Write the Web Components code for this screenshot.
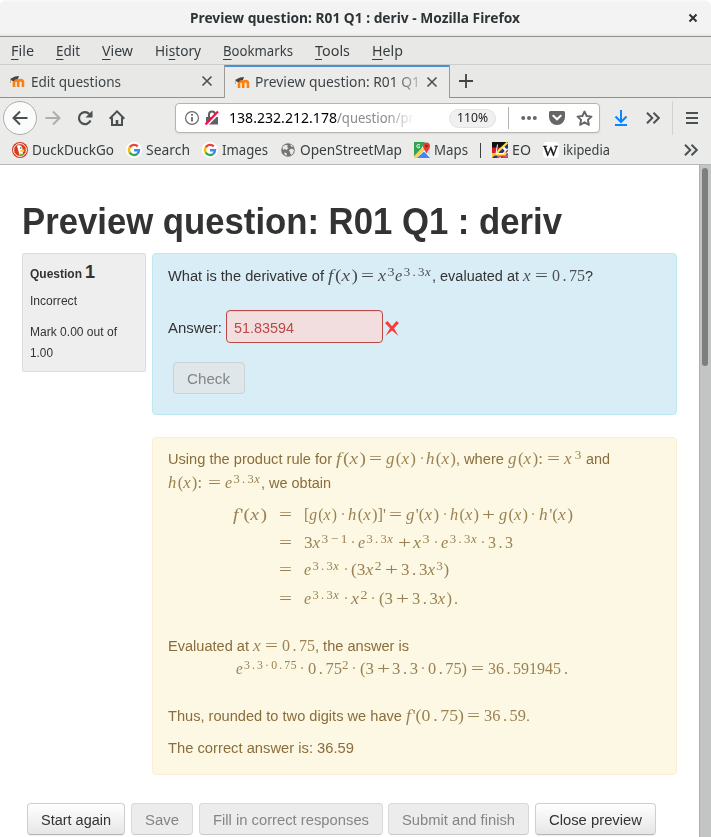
<!DOCTYPE html>
<html lang="en">
<head>
<meta charset="utf-8">
<title>Preview question: R01 Q1 : deriv</title>
<style>
html, body { margin: 0; height: 837px; overflow: hidden; background: #fff; }
</style>
</head>
<body>
<browser-window></browser-window>
<script>
/* Text squeezed or stretched horizontally to the width given in "w". */
class FitText extends HTMLElement {
  connectedCallback() {
    const root = this.attachShadow({ mode: 'open' });
    root.innerHTML = `<style>
      :host { display: inline-block; flex: none; white-space: pre; }
      span { display: inline-block; transform-origin: 0 50%; }
    </style><span><slot></slot></span>`;
    const w = +this.getAttribute('w');
    this.style.width = w + 'px';
    const span = root.querySelector('span');
    const natural = span.getBoundingClientRect().width;
    if (natural) span.style.transform = `scaleX(${w / natural})`;
  }
}
customElements.define('fit-text', FitText);

const define = (name, html) => customElements.define(name, class extends HTMLElement {
  connectedCallback() {
    if (this.shadowRoot) return;
    this.attachShadow({ mode: 'open' }).innerHTML = typeof html === 'function' ? html(this) : html;
  }
});
const UI = `"Noto Sans", sans-serif`;
const fit = (w, t, extra = '') => `<fit-text w="${w}" ${extra}>${t}</fit-text>`;
const svg = (w, h, body, extra = '') => `<svg width="${w}" height="${h}" viewBox="0 0 ${w} ${h}" fill="none" ${extra}>${body}</svg>`;

const ICONS = {
  moodle: svg(16, 14, `<path d="M5 13V8.500a1.900 1.900 0 0 1 4.200 0V13m0-4.500a2.200 2.200 0 0 1 4.800 0V13" stroke="#f98012" stroke-width="2.600"/><path d="M1 5L6 2.500l4-.5-1 3-3 .500-1.200 1.700-1.800-.500z" fill="#444"/><path d="M1.500 5v4" stroke="#caa68c" stroke-width="1"/>`),
  close: svg(12, 12, `<path d="M1.500 1.500l9 9m0-9l-9 9" stroke="#4b5052" stroke-width="1.600"/>`),
  wmclose: svg(10, 10, `<path d="M1.500 1.500l7 7m0-7l-7 7" stroke="#2e3436" stroke-width="2"/>`),
  plus: svg(14, 14, `<path d="M7 0v14M0 7h14" stroke="#3f4547" stroke-width="1.800"/>`),
  back: svg(16, 16, `<path d="M15.500 8H1.500M8 1.500L1.500 8 8 14.500" stroke="#4a4f52" stroke-width="2"/>`),
  forward: svg(16, 16, `<path d="M.5 8h14M8 1.500L14.500 8 8 14.500" stroke="#adadab" stroke-width="2"/>`),
  reload: svg(16, 16, `<path d="M13.500 10.500A6 6 0 1 1 12.300 4" stroke="#4a4f52" stroke-width="2.200"/><path d="M15.500.5v7H8.500z" fill="#4a4f52"/>`),
  home: svg(16, 16, `<path d="M.7 8.700L8 1.400l7.300 7.300M3 7.500V15h10V7.500" stroke="#4a4f52" stroke-width="2"/><path d="M6.700 15v-5h2.600v5z" fill="#4a4f52"/>`),
  info: svg(14, 14, `<circle cx="7" cy="7" r="6.400" stroke="#6a6a6a" stroke-width="1.200"/><path d="M7 6v4.600M7 3v1.700" stroke="#6a6a6a" stroke-width="1.800"/>`),
  lock: svg(16, 16, `<path d="M2 7h12v7.500H2z" fill="#606060"/><path d="M5 7V4.500a3 3 0 0 1 6 0V7" stroke="#606060" stroke-width="2"/><path d="M2 15.500L15.500 2" stroke="#fff" stroke-width="3"/><path d="M1.500 14.500L14 1.500" stroke="#f0144e" stroke-width="2.300"/>`),
  dots: svg(16, 6, `<g fill="#666"><circle cx="2.200" cy="3" r="2"/><circle cx="8" cy="3" r="2"/><circle cx="13.800" cy="3" r="2"/></g>`),
  pocket: svg(16, 14, `<path d="M1.500 0h13A1.500 1.500 0 0 1 16 1.500V6A8 8 0 0 1 0 6V1.500A1.500 1.500 0 0 1 1.500 0z" fill="#666"/><path d="M4.300 4.800L8 8.300l3.700-3.500" stroke="#fff" stroke-width="2" stroke-linecap="round"/>`),
  star: svg(17, 16, `<path d="M8.500 1.500l2.100 4.500 4.900.600-3.600 3.300 1 4.900-4.400-2.500-4.400 2.500 1-4.900-3.600-3.300 4.900-.600z" stroke="#666" stroke-width="1.900" stroke-linejoin="round"/>`),
  download: svg(14, 16, `<path d="M7 0v11.500M1.500 6.500L7 12l5.500-5.500M1 15h12" stroke="#0a84ff" stroke-width="2"/>`),
  more: svg(14, 12, `<path d="M1 .7L6.300 6 1 11.300M7.500.7L12.800 6l-5.300 5.300" stroke="#4c5153" stroke-width="2"/>`),
  menu: svg(12, 12, `<path d="M0 1h12M0 6h12M0 11h12" stroke="#4a4f52" stroke-width="2"/>`),
  ddg: svg(16, 16, `<circle cx="8" cy="8" r="8" fill="#d63a1b"/><circle cx="8" cy="8" r="6.400" stroke="#fff" stroke-width="1"/><path d="M5 3.800C8 2.500 10.500 4 10.500 7l.5 6H7.500z" fill="#fff"/><path d="M8 8l4.500-.5-.5 2.200H8.500z" fill="#fc3"/><path d="M7.500 11.500l4 .5-1 2H8z" fill="#65bc46"/><circle cx="8.700" cy="6" r=".8" fill="#2d4f8e"/>`),
  google: svg(16, 16, `<circle cx="8" cy="8" r="8" fill="#fff"/><g stroke-width="2.400"><path d="M11.700 4.300A5 5 0 0 0 3.800 5.400" stroke="#ea4335"/><path d="M3.800 5.300a5 5 0 0 0 0 5.400" stroke="#fbbc05"/><path d="M3.700 10.500a5 5 0 0 0 7.600 1.300" stroke="#34a853"/><path d="M8 8.200h5a5 5 0 0 1-1.700 3.600" stroke="#4285f4"/></g>`),
  globe: svg(14, 14, `<circle cx="7" cy="7" r="6.800" fill="#747474"/><path d="M1.500 3.800l3-2 2.500.700-1 1.500 1.500 1-2 2L3.500 6 2 7zM8 7l3-1.500 2 1.500-1 3.500-2 1.500-1-2.500zM9 1.500l2 .500 1.200 2-2-.500zM3 9.500l2.500.500.500 2.500-2-.500z" fill="#e9e9e8"/>`),
  maps: svg(16, 16, `<path d="M1 1h14v14H1z" fill="#fff"/><path d="M0 0h11L7 7l-7 7.500z" fill="#32a350"/><path d="M0 14.500L8.500 6l2 2L3 16H0z" fill="#fbd04b"/><path d="M3 16l7-6.500 6 6.500z" fill="#4285f4"/><path d="M10.500 9L16 14V6z" fill="#d5dbe5"/><path d="M12.500 12c-.3-3-3.500-4.500-3.500-8a3.500 3.500 0 0 1 7 0c0 3.500-3.200 5-3.500 8z" fill="#e53b30"/><circle cx="12.500" cy="4" r="1.200" fill="#7b241e"/><path d="M6 3.300A1.700 1.700 0 1 0 6 5H4.500" stroke="#fff" stroke-width="1"/>`),
  eo: svg(16, 16, `<path d="M0 0h16v16H0z" fill="#24358b"/><path d="M0 0h16L0 16z" fill="#111"/><path d="M0 5.500h10.500L0 16z" fill="#d51c27"/><path d="M0 11h5l-5 5z" fill="#f7c924"/><path d="M8 16l8-9M11 5l5 6M5 14h11" stroke="#fff" stroke-width="2.500"/><path d="M9 16l7-8M5 14h11" stroke="#d51c27" stroke-width="1.400"/><path d="M15.500.5L7 8.500 4.500 12.500h8l1.500-2" stroke="#ffe34d" stroke-width="2.200"/><path d="M5.500 2.500L4 11.500h8" stroke="#fff" stroke-width="1"/>`),
  wrong: svg(14, 15, `<path d="M2.500 0L7 5.200 11.500 0 14 2 9 7.300 13.500 15 7 9.500.5 15 5 7.300 0 2z" fill="#fb3d3a"/>`)
};
define('ui-icon', el => `<style>:host{display:block;flex:none;line-height:0}svg{display:block}</style>${ICONS[el.getAttribute('name')]}`);
const icon = (name, style = '') => `<ui-icon name="${name}" style="${style}"></ui-icon>`;

define('title-bar', `<style>
 :host{display:flex;align-items:center;height:36px;box-sizing:border-box;background:linear-gradient(#fafafa 0,#f3f3f3 2px,#f3f3f3 33px,#e5e5e3 36px);font:bold 14.500px/34px ${UI};color:#2e3436;padding:0 13px 1px 190px;justify-content:space-between;border-radius:6px 6px 0 0}
 fit-text{margin-top:-2px}
 </style>${fit(330, 'Preview question: R01 Q1 : deriv - Mozilla Firefox')}${icon('wmclose')}`);

define('menu-bar', `<style>
 :host{display:flex;height:29px;box-sizing:border-box;padding-left:11px;gap:22px;border-top:1px solid #8f908c;background:#e8e8e7;border-bottom:1px solid #ccccca;font:14.900px/27px ${UI};color:#373d3f}
 u{text-underline-offset:3px;text-decoration-thickness:1px}
 </style>${[[23, '<u>F</u>ile'], [24, '<u>E</u>dit'], [31, '<u>V</u>iew'], [46, 'Hi<u>s</u>tory'], [70, '<u>B</u>ookmarks'], [35, '<u>T</u>ools'], [31, '<u>H</u>elp']].map(m => fit(...m)).join('')}`);

define('tab-strip', `<style>
 :host{display:flex;height:33px;background:#e8e8e7;font:14.900px/33px ${UI};color:#3f4547}
 .tab,.rest{box-sizing:border-box;display:flex;align-items:center;border-bottom:1px solid #8f908c}
 .tab{width:224px;padding:0 11px 0 9px}
 .active{width:226px;border:solid #9a9b98;border-width:0 1px;background:#ebebea;box-shadow:inset 0 2px #4a90d9;padding:0 11px 0 9px}
 .label{margin-left:6px;flex:1;height:33px}
 .active .label{margin-left:5px;-webkit-mask:linear-gradient(90deg,#000 138px,transparent 174px);mask:linear-gradient(90deg,#000 138px,transparent 174px)}
 .rest{flex:1;padding-left:9px}
 </style><div class="tab">${icon('moodle')}<div class="label">${fit(90, 'Edit questions')}</div>${icon('close')}</div>
 <div class="tab active">${icon('moodle')}<div class="label">${fit(165, 'Preview question: R01 Q1')}</div>${icon('close')}</div>
 <div class="rest">${icon('plus')}</div>`);

define('nav-bar', `<style>
 :host{display:flex;align-items:center;height:40px;background:#ebebea;font:14.900px/28px ${UI};color:#000}
 .back{width:32px;height:32px;border:1px solid #aeaeac;border-radius:50%;background:#fbfbfb;display:grid;place-items:center;margin-left:3px}
 .url{box-sizing:border-box;width:425px;height:30px;margin-left:50px;border:1px solid #b4b4b2;border-radius:4px;background:#fff;display:flex;align-items:center;padding-left:9px;box-shadow:0 1px 2px #0001}
 .path{display:flex;height:30px;margin-left:9px;width:220px}
 .path .p{color:#8b8b8b;-webkit-mask:linear-gradient(90deg,#000 50px,transparent 78px);mask:linear-gradient(90deg,#000 50px,transparent 78px)}
 .zoom{box-sizing:border-box;width:47px;height:19px;border-radius:10px;background:#f0f0f0;border:1px solid #e2e2e2;font-size:12px;line-height:16px;padding-left:7px;color:#222}
 .sep{width:1px;height:22px;background:#b5b5b5;margin:0 12px 0 12px}
 .vsep{width:1px;height:34px;background:#d2d2d0;margin:0 13px 0 12px}
 </style>
 <div class="back">${icon('back')}</div>${icon('forward', 'margin-left:8px')}${icon('reload', 'margin-left:16px')}${icon('home', 'margin-left:16px')}
 <div class="url">${icon('info')}${icon('lock', 'margin-left:5px')}<div class="path">${fit(108, '138.232.212.178')}${fit(77, '/question/pr', 'class="p"')}</div>
 <div class="zoom">${fit(31, '110%')}</div><div class="sep"></div>${icon('dots')}${icon('pocket', 'margin-left:12px')}${icon('star', 'margin-left:11px')}</div>
 ${icon('download', 'margin-left:14px')}${icon('more', 'margin-left:18px')}<div class="vsep"></div>${icon('menu')}`);

const bm = (gap, name, tgap, w, t) => `${icon(name, `margin-left:${gap}px`)}${fit(w, t, `style="margin-left:${tgap}px"`)}`;
define('bookmark-bar', `<style>
 :host{display:flex;align-items:center;box-sizing:border-box;height:27px;background:#ebebea;border-bottom:1px solid #b7b7b5;font:14.900px/24px ${UI};color:#393f41;padding:0 13px 2px 0}
 fit-text{margin-top:-2px}
 .bar{width:1px;height:15px;background:#3a4042;margin-left:12px;margin-right:1px}
 .w{width:16px;height:16px;border-radius:4px;background:#fff;margin-left:12px;font:15px/18px "Liberation Serif",serif;color:#111;-webkit-text-stroke:.3px #111}
 .w fit-text{margin:0}
 .fill{flex:1}
 </style>${bm(12, 'ddg', 4, 82, 'DuckDuckGo')}${bm(12, 'google', 4, 44, 'Search')}${bm(12, 'google', 4, 46, 'Images')}${bm(13, 'globe', 5, 102, 'OpenStreetMap')}${bm(12, 'maps', 4, 34, 'Maps')}<div class="bar"></div>${bm(10, 'eo', 4, 19, 'EO')}<div class="w">${fit(15, 'W')}</div>${fit(47, 'ikipedia', 'style="margin-left:4px"')}<div class="fill"></div>${icon('more')}`);

/* A line of runs: each run is [left, right, html, kind]; kind "m" is mathematics. */
const line = (start, top, runs) => {
  let x = start;
  return `<div class="line" style="margin-top:${top}px">` + runs.map(([a, b, t, k = '']) => {
    const s = `<fit-text class="${k}" w="${b - a}" style="margin-left:${a - x}px">${t}</fit-text>`;
    x = b;
    return s;
  }).join('') + '</div>';
};
const LINE = `.line{display:flex;align-items:baseline;height:24px;line-height:24px}
 .m{font-family:"Liberation Serif",serif;font-size:16px;opacity:.85;word-spacing:-1.500px}
 .m i{letter-spacing:1.300px}
 sup{font-size:12.500px;line-height:0;vertical-align:5px;letter-spacing:.5px;word-spacing:-1.800px}
 sup i{letter-spacing:.5px}`;
const X = '<i>x</i>', E = '<i>e</i><sup>3 . 3<i>x</i></sup>', P = c => `<i>${c}</i>(<i>x</i>)`;
const eq = a => [a - 1, a + 12, '=', 'm'], plus = a => [a - 1, a + 12, '+', 'm'], dot = a => [a - 1, a + 3, '·', 'm'];
const m = (a, b, t) => [a, b, t, 'm'];

define('push-button', el => `<style>
 :host{display:block;box-sizing:border-box;height:32px;border:1px solid #cfcfcf;border-bottom-color:#b5b5b5;border-radius:4px;background:linear-gradient(#fff,#e6e6e6);padding-left:13px;line-height:31px;color:#333;box-shadow:0 1px 1px #0001}
 :host([off]){background:#ececec;color:#858585;border-color:#d9d9d9;border-bottom-color:#c8c8c8;box-shadow:none}
 </style><slot></slot>`);
const button = (w, tw, t, off, style = '') => `<push-button ${off ? 'off' : ''} style="width:${w}px;${style}">${fit(tw, t)}</push-button>`;

define('question-info', `<style>
 :host{display:block;box-sizing:border-box;width:124px;height:119px;background:#eee;border:1px solid #dcdcdc;border-radius:2px;padding:7px 7px;font-size:12px;line-height:21px;color:#333}
 .no{font-weight:bold;display:flex;align-items:baseline;gap:3px;height:24px;line-height:22px}
 .no .n{font-size:18px}
 .state{margin:6px 0 10px}
 </style><div class="no">${fit(52, 'Question')}<span class="n">1</span></div><div class="state">${fit(47, 'Incorrect')}</div><div>${fit(87, 'Mark 0.00 out of')}</div><div>${fit(23, '1.00')}</div>`);

define('question-form', `<style>${LINE}
 :host{display:block;box-sizing:border-box;height:162px;background:#d9edf7;border:1px solid #bce8f1;border-radius:4px;padding:10px 15px;color:#333}
 .answer{display:flex;align-items:center;margin-top:22px}
 .answer>fit-text{margin-top:2px}
 .input{box-sizing:border-box;width:157px;height:33px;border:1px solid #b94a48;border-radius:4px;background:#f2dede;color:#b94a48;box-shadow:inset 0 1px 1px #0001;line-height:33px;padding-left:7px;margin:0 2px 0 4px}
 .answer ui-icon{margin-top:3px}
 </style>${line(168, 0, [[168, 324, 'What is the derivative of'], m(328, 358, P('f')), eq(362), m(378, 395, X + '<sup>3</sup>'), m(395, 432, E), [432, 519, ', evaluated at'], m(523, 532, X), eq(536), m(552, 585, '0 . 75'), [585, 593, '?']])}
 <div class="answer">${fit(54, 'Answer:')}<div class="input">${fit(60, '51.83594')}</div>${icon('wrong')}</div>
 ${button(72, 43, 'Check', true, 'margin:19px 0 0 5px;background:#dfe7ea;border-color:#c9d2d6')}`);

define('question-feedback', `<style>${LINE}
 :host{display:block;box-sizing:border-box;height:338px;background:#fcf8e3;border:1px solid #fbeed5;border-radius:4px;padding:9px 15px;color:#8a6d3b}
 </style>
 ${line(168, 0, [[168, 332, 'Using the product rule for'], m(336, 366, P('f')), eq(370), m(386, 416, P('g')), dot(421), m(426, 456, P('h')), [456, 460, ','], [464, 504, 'where'], m(508, 543, P('g') + ':'), eq(548), m(564, 582, X + '<sup> 3</sup>'), [586, 610, 'and']])}
 ${line(168, 0, [m(168, 202, P('h') + ':'), eq(209), m(225, 261, E), [261, 265, ','], [269, 331, 'we obtain']])}
 ${line(168, 8, [m(233, 267, "<i>f</i>'(<i>x</i>)"), eq(280), m(304, 337, '[' + P('g')), dot(342), m(348, 386, P('h') + "]'"), eq(390), m(406, 439, "<i>g</i>'(<i>x</i>)"), dot(444), m(450, 479, P('h')), plus(483), m(499, 528, P('g')), dot(532), m(539, 573, "<i>h</i>'(<i>x</i>)")])}
 ${line(168, 4, [eq(280), m(304, 348, '3<i>x</i><sup>3 − 1</sup>'), dot(352), m(358, 394, E), plus(399), m(413, 430, X + '<sup>3</sup>'), dot(435), m(441, 478, E), dot(482), m(488, 513, '3 . 3')])}
 ${line(168, 3, [eq(280), m(304, 340, E), dot(345), m(351, 382, '(3<i>x</i><sup>2</sup>'), plus(386), m(401, 449, '3 . 3<i>x</i><sup>3</sup>)')])}
 ${line(168, 5, [eq(280), m(304, 340, E), dot(345), m(351, 368, X + '<sup>2</sup>'), dot(372), m(379, 393, '(3'), plus(397), m(412, 452, '3 . 3<i>x</i>)'), m(454, 458, '.')])}
 ${line(168, 23, [[168, 249, 'Evaluated at'], m(253, 262, X), eq(266), m(282, 315, '0 . 75'), [315, 409, ', the answer is']])}
 ${line(168, -1, [m(236, 297, '<i>e</i><sup>3 . 3 · 0 . 75</sup>'), dot(301), m(308, 349, '0 . 75<sup>2</sup>'), dot(353), m(360, 374, '(3'), plus(378), m(392, 418, '3 . 3'), dot(422), m(428, 467, '0 . 75)'), eq(472), m(488, 561, '36 . 591945'), m(564, 568, '.')])}
 ${line(168, 23, [[168, 402, 'Thus, rounded to two digits we have'], m(406, 464, "<i>f</i>'(0 . 75)"), eq(468), m(484, 526, '36 . 59'), [526, 530, '.']])}
 ${line(168, 8, [[168, 354, 'The correct answer is: 36.59']])}`);

define('preview-page', `<style>
 :host{display:block;flex:1;height:672px;overflow:hidden;background:#fff;font:15.400px/24px "Liberation Sans",sans-serif;color:#333}
 h1{margin:0;padding:35px 0 0 22px;height:53px;font-size:36.500px;line-height:44px}
 .question{display:flex;align-items:flex-start;gap:6px;padding-left:22px}
 .col{width:525px;display:grid;gap:22px}
 .actions{display:flex;padding:28px 0 0 27px;gap:6px}
 </style><h1>${fit(540, 'Preview question: R01 Q1 : deriv')}</h1>
 <div class="question"><question-info></question-info><div class="col"><question-form></question-form><question-feedback></question-feedback></div></div>
 <div class="actions">${button(98, 70, 'Start again')}${button(62, 34, 'Save', 1)}${button(184, 156, 'Fill in correct responses', 1)}${button(141, 113, 'Submit and finish', 1, 'margin-left:-1px')}${button(121, 93, 'Close preview')}</div>`);

define('scroll-bar', `<style>
 :host{display:block;box-sizing:border-box;width:12px;height:672px;background:#c3c5c4;border-left:1px solid #adafae;padding:3px 0 0 2px}
 div{width:6px;height:198px;border-radius:3px;background:#7b7f80}
 </style><div></div>`);

define('browser-window', `<style>
 :host{display:block;width:711px;height:837px;overflow:hidden}
 .view{display:flex}
 </style><title-bar></title-bar><menu-bar></menu-bar><tab-strip></tab-strip><nav-bar></nav-bar><bookmark-bar></bookmark-bar>
 <div class="view"><preview-page></preview-page><scroll-bar></scroll-bar></div>`);
</script>
</body>
</html>
